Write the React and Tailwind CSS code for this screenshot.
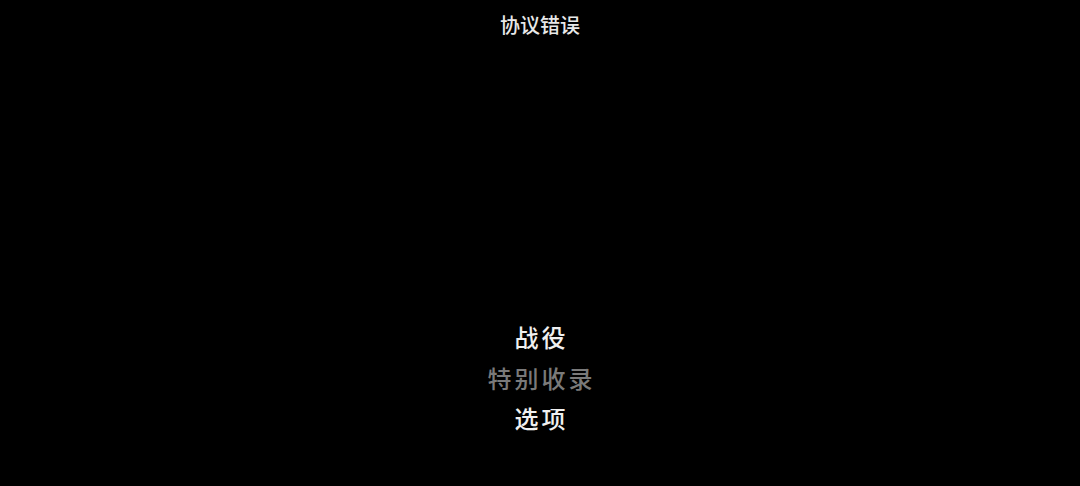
export default function App() {
  const items = [
    { label: "战役", dim: false },
    { label: "特别收录", dim: true },
    { label: "选项", dim: false },
  ];

  return (
    <div
      className="w-[1080px] h-[486px] bg-black flex flex-col items-center overflow-hidden"
      style={{ fontFamily: '"Noto Sans CJK SC", "Noto Sans", sans-serif' }}
    >
      <div className="mt-[11px] text-[20px] leading-[28px] text-[#e8e8e8] font-medium">协议错误</div>
      <div className="mt-[278px] flex flex-col items-center">
        {items.map((item) => (
          <div
            key={item.label}
            className={`text-[24px] leading-[40.5px] tracking-[3px] pl-[3px] font-medium ${
              item.dim ? "text-[#7a7a7a]" : "text-[#f0f0f0]"
            }`}
          >
            {item.label}
          </div>
        ))}
      </div>
    </div>
  );
}
